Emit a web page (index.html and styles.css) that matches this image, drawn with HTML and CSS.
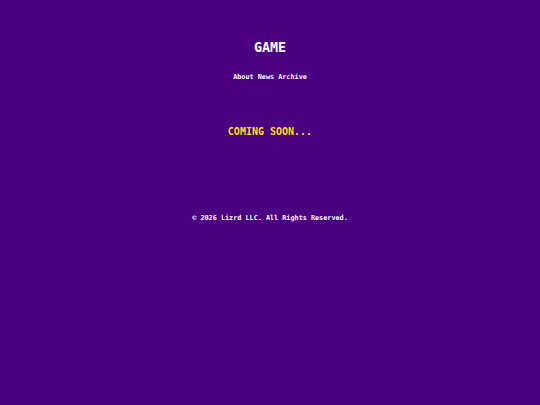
FILE: index.html
```html
<!DOCTYPE html>
<html>
<head>
<meta charset="utf-8">
<link rel="stylesheet" href="styles.css">
</head>
<body>
<div class="page">
  <header class="header">
    <h1 class="title">GAME</h1>
    <nav class="nav"><a href="#">About</a> <a href="#">News</a> <a href="#">Archive</a></nav>
  </header>
  <main class="main">
    <p class="soon">COMING SOON...</p>
  </main>
  <footer class="footer">© 2026 Lizrd LLC. All Rights Reserved.</footer>
</div>
</body>
</html>
```
FILE: styles.css
```css
html, body {
  margin: 0;
  padding: 0;
  background: #4b0082;
  height: 100%;
}
body {
  font-family: "DejaVu Sans Mono", monospace;
  font-weight: bold;
  color: #ffffff;
}
.page {
  display: flex;
  flex-direction: column;
  align-items: center;
}
.header {
  display: flex;
  flex-direction: column;
  align-items: center;
  padding-top: 40px;
}
.title {
  margin: 0;
  font-size: 13.3px;
  line-height: 16px;
}
.nav {
  margin-top: 17px;
  font-size: 6.8px;
  line-height: 8px;
}
.nav a {
  color: #ffffff;
  text-decoration: none;
}
.main {
  padding-top: 45px;
}
.soon {
  margin: 0;
  color: #ffdf1a;
  font-size: 10px;
  line-height: 12px;
}
.footer {
  margin-top: 76px;
  font-size: 6.8px;
  line-height: 8px;
}
```
